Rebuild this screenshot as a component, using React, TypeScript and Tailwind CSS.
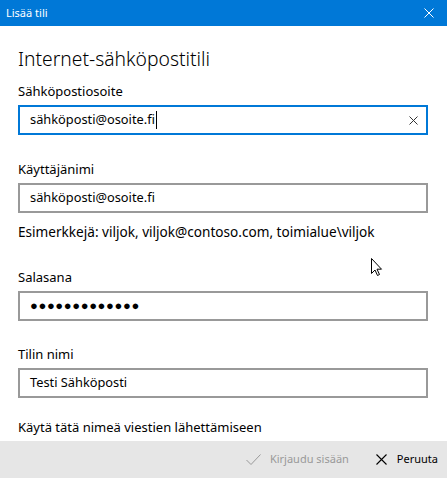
import React from 'react';

const font = { fontFamily: '"Noto Sans", "Liberation Sans", sans-serif' };

function Field({ label, value, focused, dots }: { label: string; value: string; focused?: boolean; dots?: boolean }) {
  return (
    <div className="flex flex-col">
      <div className="text-[13px] text-black leading-[20px] h-[20px]">{label}</div>
      <div
        className={`mt-[4px] h-[30px] flex items-center pl-[10px] pr-[8px] border-2 ${
          focused ? 'border-[#0078d7]' : 'border-[#999999]'
        }`}
      >
        <span className={dots ? 'text-[13px] tracking-[0.6px] text-black' : 'text-[12.8px] text-black'}>{value}</span>
        {focused && <span className="w-px h-[18px] bg-black ml-px" />}
        {focused && (
          <svg className="ml-auto" width="9" height="9" viewBox="0 0 9 9">
            <path d="M0.5 0.5L8.5 8.5M8.5 0.5L0.5 8.5" stroke="#333" strokeWidth="1" />
          </svg>
        )}
      </div>
    </div>
  );
}

export default function App() {
  return (
    <div className="w-[447px] h-[478px] flex flex-col overflow-hidden bg-white relative" style={font}>
      <div className="h-[26px] bg-[#0078d7] flex items-center pl-[6px] pr-[13px] shrink-0">
        <span className="text-white text-[11px]">Lisää tili</span>
        <svg className="ml-auto" width="10" height="10" viewBox="0 0 10 10">
          <path d="M0.5 0.5L9.5 9.5M9.5 0.5L0.5 9.5" stroke="#fff" strokeWidth="1" />
        </svg>
      </div>

      <div className="flex-1 overflow-hidden pl-[18px] pr-[19px]">
        <h1 className="text-[19.3px] font-light text-black mt-[19px] leading-[28px]">Internet-sähköpostitili</h1>
        <div className="mt-[8px] flex flex-col">
          <Field label="Sähköpostiosoite" value="sähköposti@osoite.fi" focused />
          <div className="h-[24px] shrink-0" />
          <Field label="Käyttäjänimi" value="sähköposti@osoite.fi" />
          <div className="mt-[9px] text-[13.6px] leading-[20px] text-black">
            Esimerkkejä: viljok, viljok@contoso.com, toimialue\viljok
          </div>
          <div className="h-[25px] shrink-0" />
          <Field label="Salasana" value="●●●●●●●●●●●●●" dots />
          <div className="h-[23px] shrink-0" />
          <Field label="Tilin nimi" value="Testi Sähköposti" />
          <div className="h-[19px] shrink-0" />
          <Field label="Käytä tätä nimeä viestien lähettämiseen" value="" />
        </div>
      </div>

      <div className="h-[37px] bg-[#e6e6e6] flex items-center justify-end pr-[9px] shrink-0">
        <div className="flex items-center gap-[9px] text-[#999999] text-[11px]">
          <svg width="15" height="11" viewBox="0 0 15 11">
            <path d="M0.5 6L5 10.5L14.5 0.5" fill="none" stroke="#999" strokeWidth="1" />
          </svg>
          <span>Kirjaudu sisään</span>
        </div>
        <div className="flex items-center gap-[10px] text-black text-[11px] ml-[27px]">
          <svg width="11" height="11" viewBox="0 0 11 11">
            <path d="M0.5 0.5L10.5 10.5M10.5 0.5L0.5 10.5" stroke="#000" strokeWidth="1.1" />
          </svg>
          <span>Peruuta</span>
        </div>
      </div>

      <svg className="absolute left-[371px] top-[258px]" width="12" height="19" viewBox="0 0 12 19">
        <path d="M0.5 0.5V15.5L4 12L6.5 17.5L8.5 16.5L6 11.2H10.5Z" fill="#fff" stroke="#000" strokeWidth="1" />
      </svg>
    </div>
  );
}
